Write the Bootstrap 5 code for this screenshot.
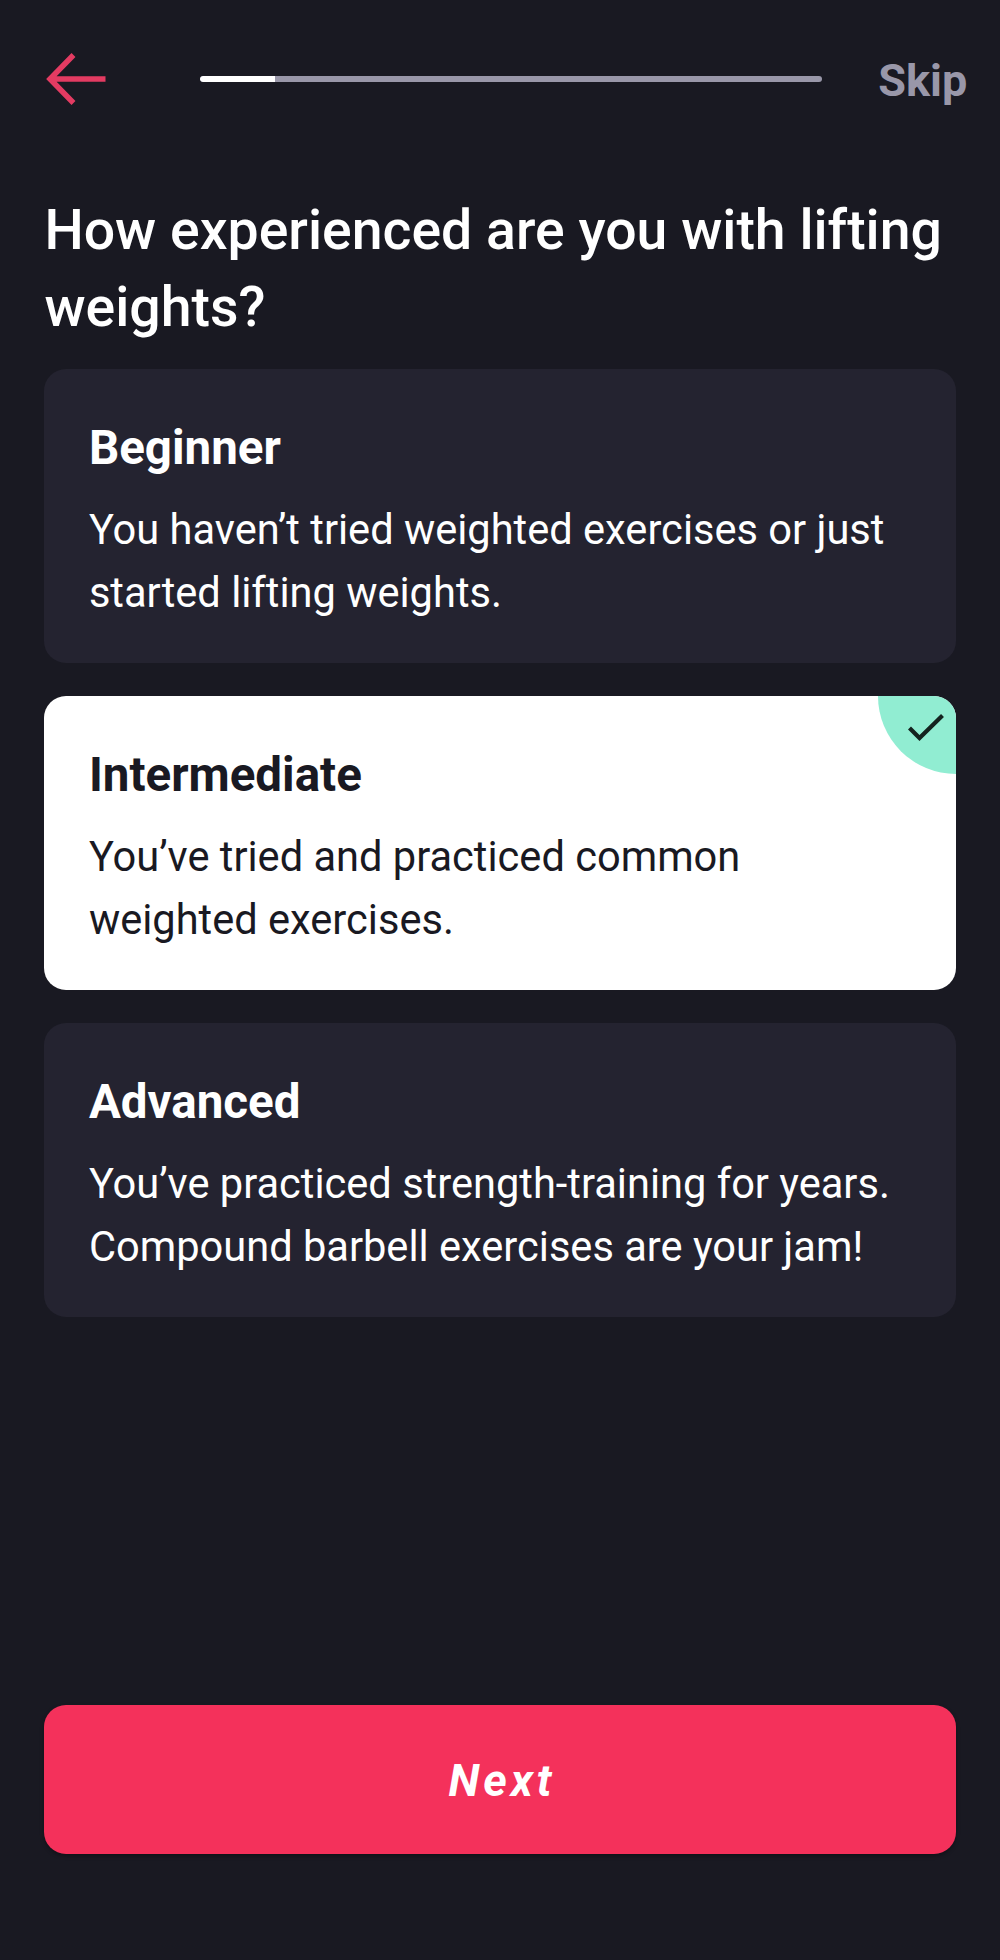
<!DOCTYPE html>
<html lang="en">
<head>
<meta charset="utf-8">
<meta name="viewport" content="width=device-width, initial-scale=1">
<title>Lifting experience</title>
<link href="https://cdn.jsdelivr.net/npm/bootstrap@5.3.0/dist/css/bootstrap.min.css" rel="stylesheet">
<style>
body{background:#191922;font-family:Roboto,sans-serif;color:#fff}
.screen{height:1960px;padding:0 44.4px}
.topbar{height:157px;margin-right:-11.6px}
.back-btn{margin:0 92.6px 0 1px;width:62px;height:54px}
.back-btn svg{display:block}
.steps{width:622px;height:6px;background:#9997a9;border-radius:3px}
.steps .progress-bar{background:#fff;border-radius:3px 0 0 3px}
.skip-link{font-size:45px;font-weight:700;color:#9997a9;line-height:52px;padding-top:4px}
.question{font-size:55.4px;font-weight:500;line-height:77px;margin:35px 0 23.4px}
.option{background:#242330;border-radius:22px;height:293.5px;padding:47.4px 44.5px 0;margin-bottom:33.5px;border:0;color:#fff}
.option h2{font-size:47.5px;font-weight:700;line-height:62px;margin:0 0 19px}
.option p{font-size:41.6px;line-height:63px;margin:0}
.option.selected{background:#fff;color:#191922}
.tick{width:78px;height:78px;background:#91edd2;border-radius:0 22px 0 78px}
.next-btn,.next-btn:hover{height:149px;background:#f4315b;border-radius:22px;color:#fff;font-size:45px;font-weight:700;font-style:italic;letter-spacing:3.9px;margin-bottom:106.5px;border:0;padding:4px 0 0 4px;box-shadow:0 2px 4px #0005}
</style>
</head>
<body>
<main class="screen d-flex flex-column">
<header class="topbar d-flex align-items-center">
<a href="#" class="back-btn" aria-label="Back"><svg width="62" height="54" viewBox="0 0 62 54" fill="none" stroke="#e33b62" stroke-width="5.5"><path d="M60.5 27H6M28.5 3L5 27L28.5 51"/></svg></a>
<div class="progress steps"><div class="progress-bar" style="width:12%"></div></div>
<a href="#" class="skip-link text-decoration-none ms-auto">Skip</a>
</header>
<h1 class="question">How experienced are you with lifting weights?</h1>
<section class="options">
<article class="card option"><h2>Beginner</h2><p>You haven’t tried weighted exercises or just started lifting weights.</p></article>
<article class="card option selected"><h2>Intermediate</h2><p>You’ve tried and practiced common<br>weighted exercises.</p>
<span class="tick position-absolute top-0 end-0"><svg class="d-block" width="78" height="78" viewBox="0 0 78 78" fill="none" stroke="#14231f" stroke-width="4.2"><path d="M31.5 32L41.5 42L64.5 19.5"/></svg></span></article>
<article class="card option"><h2>Advanced</h2><p>You’ve practiced strength-training for years. Compound barbell exercises are your jam!</p></article>
</section>
<button class="btn next-btn w-100 mt-auto">Next</button>
</main>
<script src="https://cdn.jsdelivr.net/npm/bootstrap@5.3.0/dist/js/bootstrap.bundle.min.js"></script>
</body>
</html>
